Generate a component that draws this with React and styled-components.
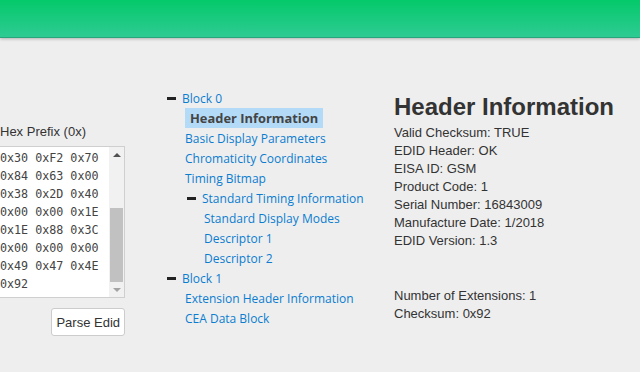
import React from 'react';
import styled, { createGlobalStyle } from 'styled-components';

const GlobalStyle = createGlobalStyle`
  html, body {
    margin: 0;
    padding: 0;
    background: #eeeeee;
    overflow: hidden;
  }
  body {
    font-family: "Liberation Sans", Arial, sans-serif;
    color: #333;
  }
`;

const TopBar = styled.div`
  height: 37px;
  background: linear-gradient(to bottom, #04c96a 0%, #2ecb93 100%);
  border-bottom: 1px solid #27a57c;
  box-shadow: 0 1px 3px rgba(0, 0, 0, 0.25);
`;

const Main = styled.div`
  display: flex;
  align-items: flex-start;
`;

const InputColumn = styled.div`
  display: flex;
  flex-direction: column;
  width: 128px;
  margin-left: -3px;
  padding-top: 86px;
  flex-shrink: 0;
`;

const Label = styled.label`
  font-size: 13px;
  line-height: 16px;
  margin-left: 3px;
  margin-bottom: 6px;
  white-space: nowrap;
`;

const HexBox = styled.div`
  box-sizing: border-box;
  display: flex;
  width: 128px;
  height: 152px;
  border: 1px solid #cfcfcf;
  background: #fff;
`;

const HexText = styled.div`
  flex: 1;
  overflow: hidden;
  padding: 2px 0 0 2px;
  color: #444;
  font-family: "DejaVu Sans Mono", "Liberation Mono", monospace;
  font-size: 11.7px;
  line-height: 18px;
  white-space: pre;
`;

const ScrollBar = styled.div`
  display: flex;
  flex-direction: column;
  width: 15px;
  background: #f1f1f1;
`;

const ScrollButton = styled.div`
  height: 15px;
  display: flex;
  align-items: center;
  justify-content: center;
  &::before {
    content: '';
    width: 0;
    height: 0;
    border-left: 4px solid transparent;
    border-right: 4px solid transparent;
    ${p => p.down
      ? 'border-top: 4px solid #a3a3a3;'
      : 'border-bottom: 4px solid #505050;'}
  }
`;

const Track = styled.div`
  flex: 1;
  display: flex;
  flex-direction: column;
  justify-content: flex-end;
`;

const Thumb = styled.div`
  height: 74px;
  margin: 0 1px;
  background: #c1c1c1;
`;

const ParseButton = styled.button`
  align-self: flex-end;
  margin-top: 10px;
  height: 28px;
  padding: 0 4px;
  background: #fff;
  border: 1px solid #cccccc;
  border-radius: 3px;
  font-family: "Liberation Sans", Arial, sans-serif;
  font-size: 13px;
  color: #333;
`;

const TreeColumn = styled.div`
  width: 228px;
  margin-left: 40px;
  padding-top: 50px;
  flex-shrink: 0;
  font-family: "Open Sans", "Noto Sans", sans-serif;
  font-size: 12px;
`;

const Row = styled.div`
  display: flex;
  align-items: center;
  height: 20px;
  padding-left: ${p => p.indent || 0}px;
  white-space: nowrap;
`;

const Toggle = styled.span`
  display: inline-block;
  width: 9px;
  height: 3px;
  background: #222;
  margin-right: 1px;
`;

const Link = styled.span`
  color: #0b7dd0;
  padding: 1px 5px;
`;

const Selected = styled.span`
  background: #b3dbf7;
  color: #444;
  font-weight: 700;
  padding: 1px 5px;
  font-size: 12.9px;
`;

const Detail = styled.div`
  padding-top: 52px;
  margin-left: 1px;
  font-size: 13px;
  line-height: 18px;
  color: #333;
`;

const Heading = styled.h2`
  font-size: 24px;
  line-height: 28px;
  margin: 3px 0 3px;
  font-weight: 700;
  color: #333;
  white-space: nowrap;
`;

const Line = styled.div`
  white-space: nowrap;
`;

const Gap = styled.div`
  height: 37px;
`;

const hexText = [
  '0x30 0xF2 0x70',
  '0x84 0x63 0x00',
  '0x38 0x2D 0x40',
  '0x00 0x00 0x1E',
  '0x1E 0x88 0x3C',
  '0x00 0x00 0x00',
  '0x49 0x47 0x4E',
  '0x92'
].join('\n');

const App = () => {
  return (
    <>
      <GlobalStyle />
      <TopBar />
      <Main>
        <InputColumn>
          <Label>Hex Prefix (0x)</Label>
          <HexBox>
            <HexText>{hexText}</HexText>
            <ScrollBar>
              <ScrollButton />
              <Track><Thumb /></Track>
              <ScrollButton down />
            </ScrollBar>
          </HexBox>
          <ParseButton>Parse Edid</ParseButton>
        </InputColumn>
        <TreeColumn>
          <Row indent={2}><Toggle /><Link>Block 0</Link></Row>
          <Row indent={20}><Selected>Header Information</Selected></Row>
          <Row indent={15}><Link>Basic Display Parameters</Link></Row>
          <Row indent={15}><Link>Chromaticity Coordinates</Link></Row>
          <Row indent={15}><Link>Timing Bitmap</Link></Row>
          <Row indent={22}><Toggle /><Link>Standard Timing Information</Link></Row>
          <Row indent={34}><Link>Standard Display Modes</Link></Row>
          <Row indent={34}><Link>Descriptor 1</Link></Row>
          <Row indent={34}><Link>Descriptor 2</Link></Row>
          <Row indent={2}><Toggle /><Link>Block 1</Link></Row>
          <Row indent={15}><Link>Extension Header Information</Link></Row>
          <Row indent={15}><Link>CEA Data Block</Link></Row>
        </TreeColumn>
        <Detail>
          <Heading>Header Information</Heading>
          <Line>Valid Checksum: TRUE</Line>
          <Line>EDID Header: OK</Line>
          <Line>EISA ID: GSM</Line>
          <Line>Product Code: 1</Line>
          <Line>Serial Number: 16843009</Line>
          <Line>Manufacture Date: 1/2018</Line>
          <Line>EDID Version: 1.3</Line>
          <Gap />
          <Line>Number of Extensions: 1</Line>
          <Line>Checksum: 0x92</Line>
        </Detail>
      </Main>
    </>
  );
};

export default App;
